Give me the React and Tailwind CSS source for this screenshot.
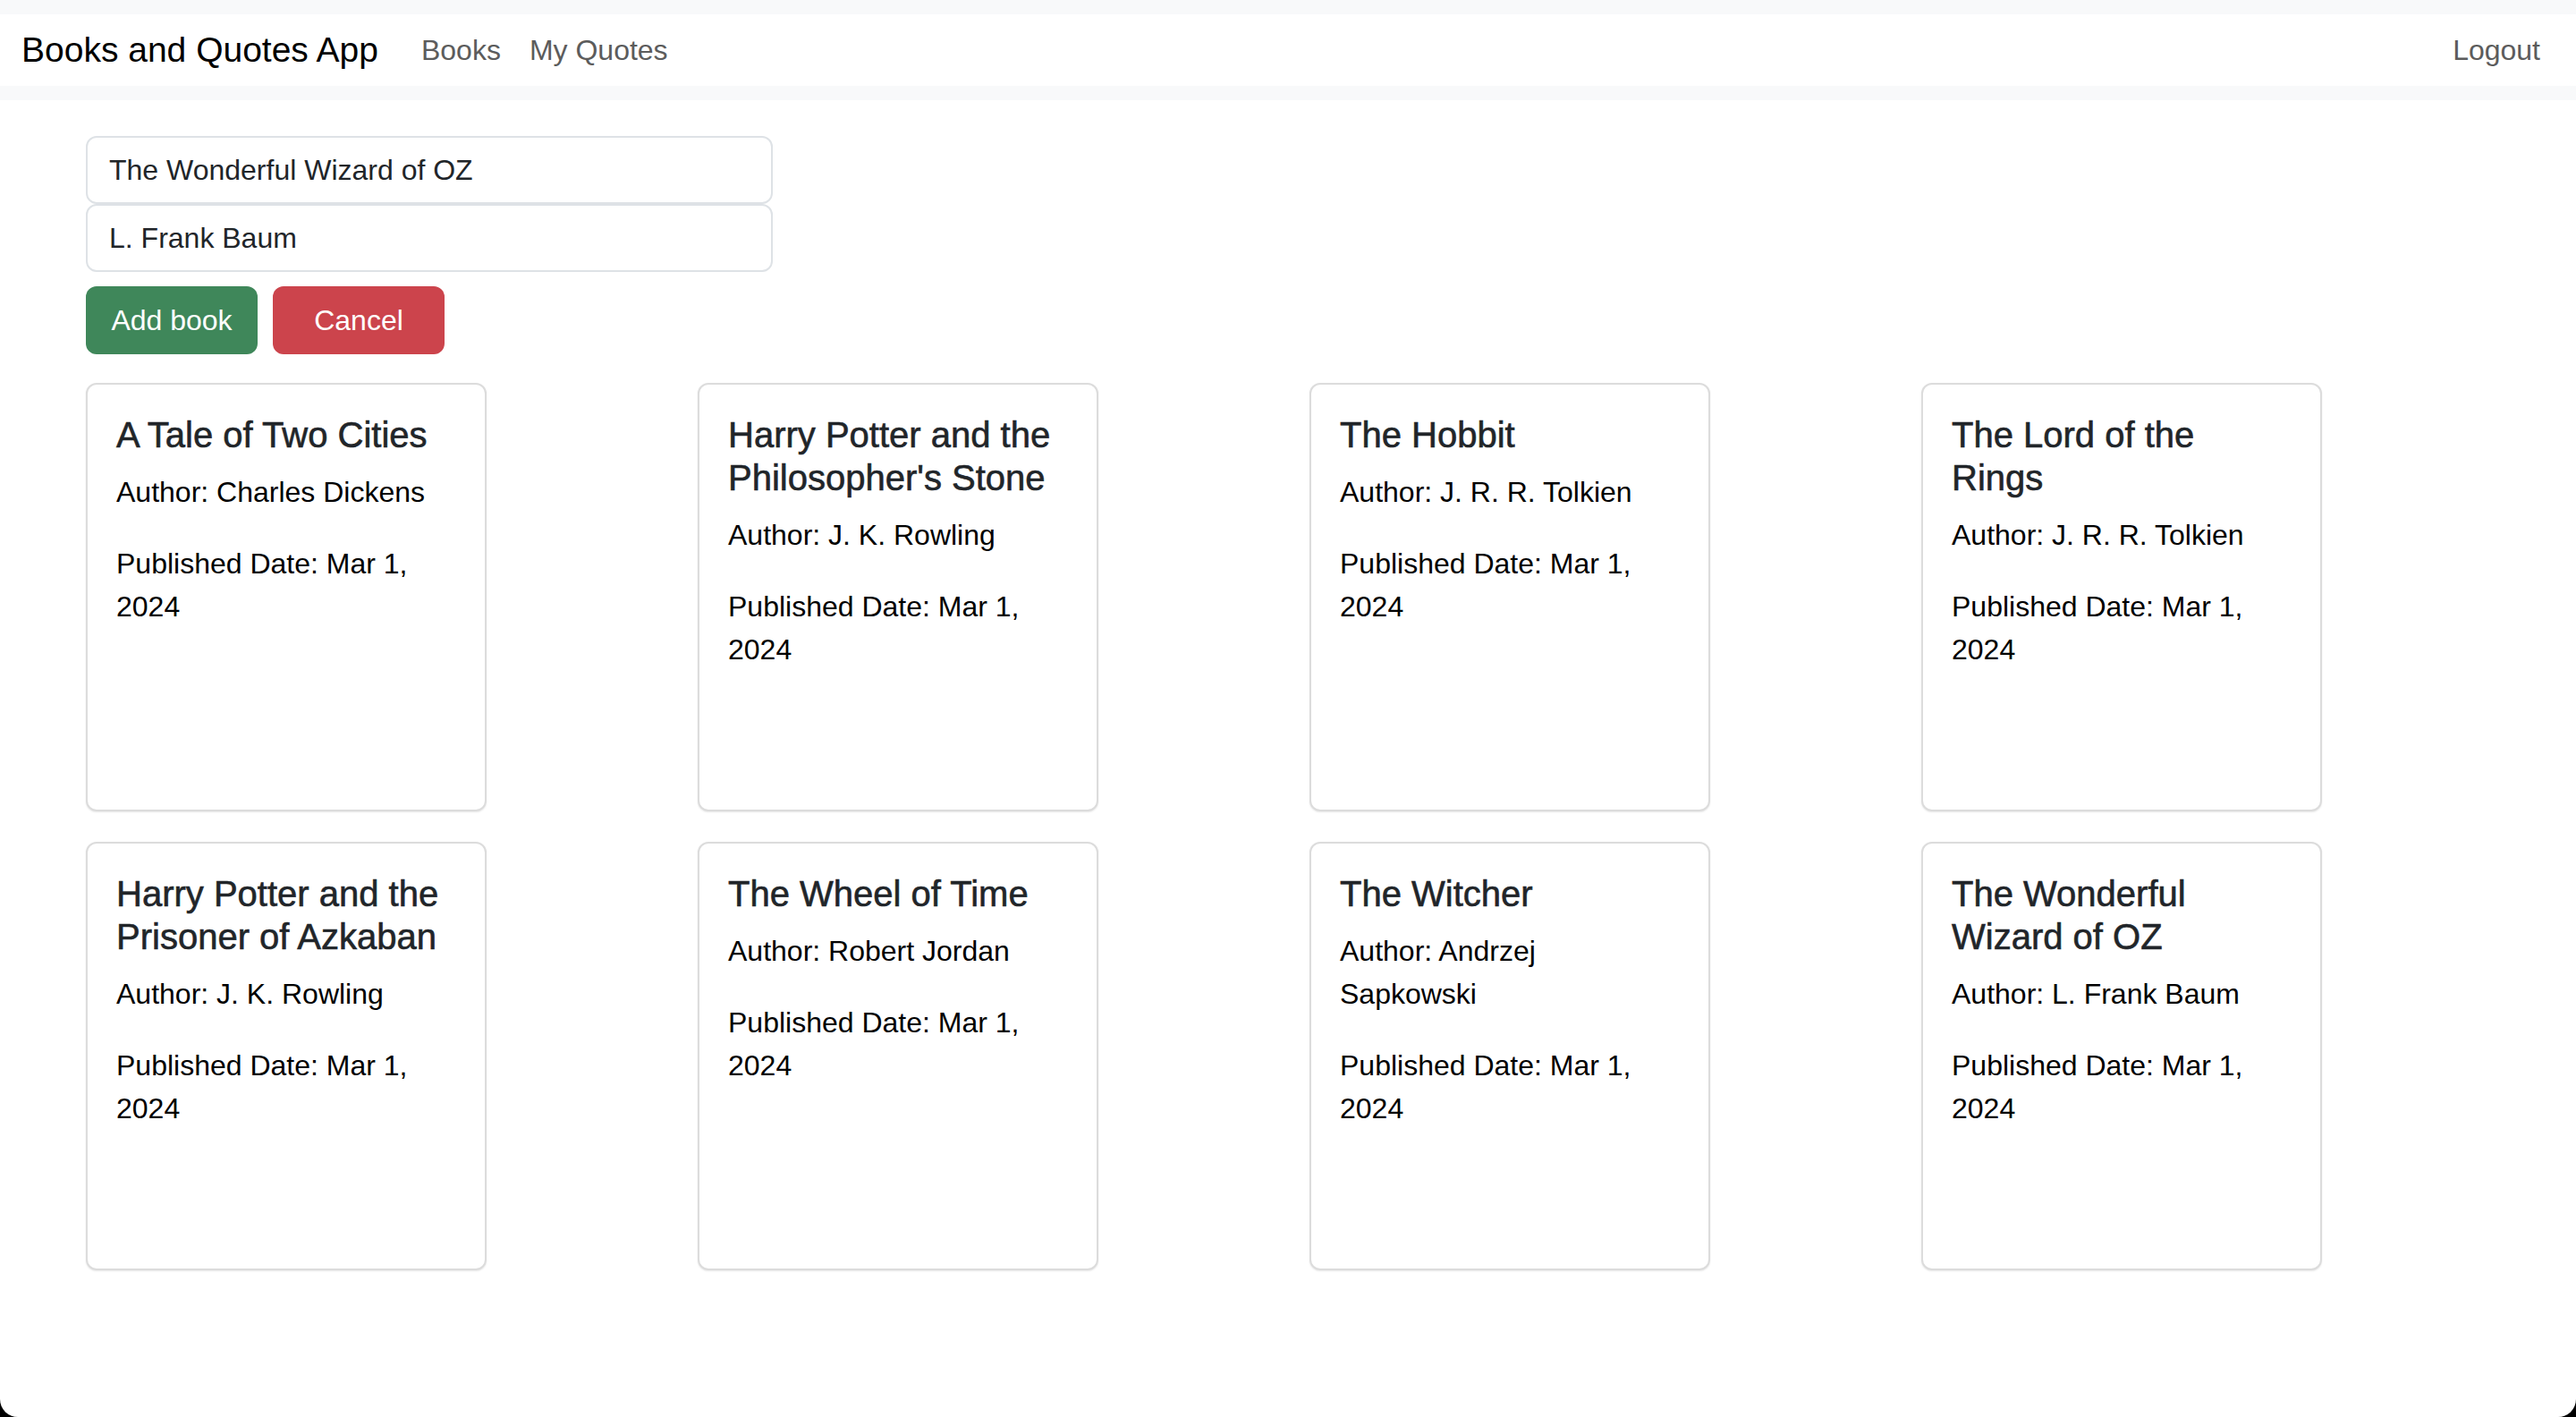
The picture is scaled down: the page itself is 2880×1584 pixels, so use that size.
import React from 'react';

const books = [
  { title: 'A Tale of Two Cities', author: 'Charles Dickens', published: 'Mar 1, 2024' },
  { title: "Harry Potter and the Philosopher's Stone", author: 'J. K. Rowling', published: 'Mar 1, 2024' },
  { title: 'The Hobbit', author: 'J. R. R. Tolkien', published: 'Mar 1, 2024' },
  { title: 'The Lord of the Rings', author: 'J. R. R. Tolkien', published: 'Mar 1, 2024' },
  { title: 'Harry Potter and the Prisoner of Azkaban', author: 'J. K. Rowling', published: 'Mar 1, 2024' },
  { title: 'The Wheel of Time', author: 'Robert Jordan', published: 'Mar 1, 2024' },
  { title: 'The Witcher', author: 'Andrzej Sapkowski', published: 'Mar 1, 2024' },
  { title: 'The Wonderful Wizard of OZ', author: 'L. Frank Baum', published: 'Mar 1, 2024' },
];

function Navbar() {
  return (
    <nav className="bg-[#f8f9fa] py-[16px]">
      <div className="bg-white h-[80px] flex items-center px-[24px]">
        <span className="text-[39px] text-black mr-[32px] leading-[60px]">Books and Quotes App</span>
        <a className="px-[16px] text-[32px] text-[#5c5c5c]">Books</a>
        <a className="px-[16px] text-[32px] text-[#5c5c5c]">My Quotes</a>
        <a className="ml-auto px-[16px] text-[32px] text-[#5c5c5c]">Logout</a>
      </div>
    </nav>
  );
}

function BookCard({ book }) {
  return (
    <div className="w-[448px] h-[479px] border-2 border-[#dcdcdc] rounded-[12px] p-[32px] bg-white shadow-[0_1px_2px_rgba(0,0,0,0.1)]">
      <h5 className="text-[40px] leading-[48px] font-medium text-[#212529] mb-[16px] [-webkit-text-stroke:0.6px_#212529]">
        {book.title}
      </h5>
      <p className="text-[32px] leading-[48px] text-black mb-[32px]">Author: {book.author}</p>
      <p className="text-[32px] leading-[48px] text-black">Published Date: {book.published}</p>
    </div>
  );
}

export default function App() {
  return (
    <div className="bg-black h-screen font-['Liberation_Sans',Arial,sans-serif]">
      <div className="bg-white h-full rounded-b-[20px] overflow-hidden">
        <Navbar />
        <div className="pl-[96px] pt-[40px]">
          <div className="w-[768px] flex flex-col">
            <input
              className="h-[76px] border-2 border-[#dee2e6] rounded-[12px] px-[24px] text-[32px] text-[#212529] outline-none"
              defaultValue="The Wonderful Wizard of OZ"
            />
            <input
              className="h-[76px] border-2 border-[#dee2e6] rounded-[12px] px-[24px] text-[32px] text-[#212529] outline-none"
              defaultValue="L. Frank Baum"
            />
          </div>
          <div className="flex gap-[17px] mt-[16px]">
            <button className="w-[192px] h-[76px] rounded-[12px] bg-[#3f875a] text-white text-[32px]">Add book</button>
            <button className="w-[192px] h-[76px] rounded-[12px] bg-[#cc444c] text-white text-[32px]">Cancel</button>
          </div>
          <div className="mt-[32px] w-[2736px] grid grid-cols-4 gap-y-[34px]">
            {books.map((book, index) => (
              <BookCard key={index} book={book} />
            ))}
          </div>
        </div>
      </div>
    </div>
  );
}
